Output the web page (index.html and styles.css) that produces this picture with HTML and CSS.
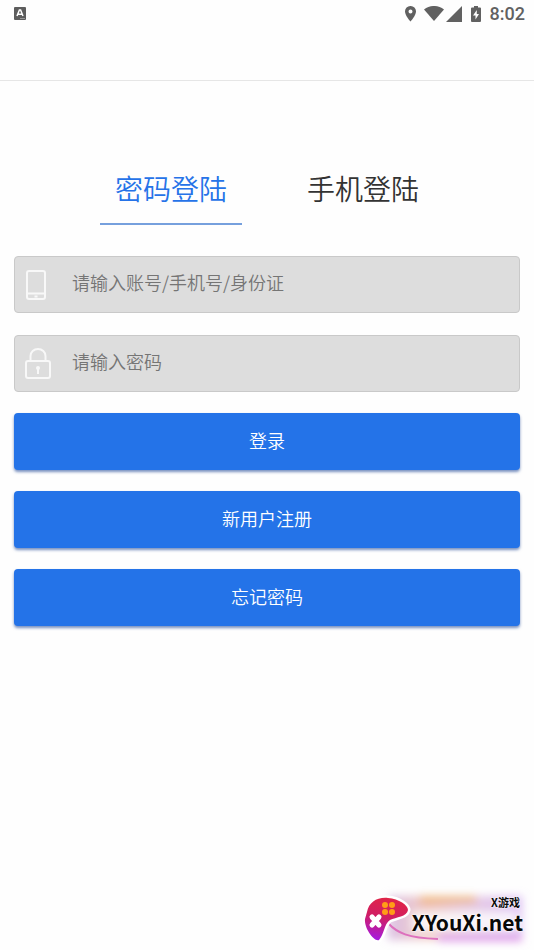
FILE: index.html
```html
<!DOCTYPE html>
<html lang="zh-CN">
<head>
<meta charset="utf-8">
<meta name="viewport" content="width=device-width, initial-scale=1">
<title>登录</title>
<link rel="stylesheet" href="styles.css">
</head>
<body>
<header class="top">
  <div class="status">
    <svg class="status-app" width="12" height="13" viewBox="0 0 12 13" aria-hidden="true">
      <rect width="12" height="13" rx="1" fill="#5d5d5d"/>
      <path d="M3 9 5.400 3h1.200L9 9M4 7.200h4" fill="none" stroke="#fff" stroke-width="1.500"/>
      <path d="M6 11.500h5" stroke="#999"/>
    </svg>
    <div class="status-icons">
      <svg class="pin" width="11" height="16" viewBox="0 0 11 16" aria-hidden="true">
        <path fill-rule="evenodd" d="M5.500 0A5.400 5.400 0 0 0 0 5.500C0 9.500 5.500 15.500 5.500 15.500S11 9.500 11 5.500A5.400 5.400 0 0 0 5.500 0ZM5.500 3.500a2 2 0 1 1 0 4 2 2 0 0 1 0-4Z"/>
      </svg>
      <svg class="wifi" width="20" height="15" viewBox="0 0 20 15" aria-hidden="true">
        <path d="M0 3.500C6-1.200 14-1.200 20 3.500L10 15Z"/>
      </svg>
      <svg class="signal" width="16" height="16" viewBox="0 0 16 16" aria-hidden="true">
        <path d="M16 0V16H0Z"/>
      </svg>
      <svg class="battery" width="10" height="16" viewBox="0 0 10 16" aria-hidden="true">
        <path fill-rule="evenodd" d="M3 0h4v1.500h2a1 1 0 0 1 1 1V15a1 1 0 0 1-1 1H1a1 1 0 0 1-1-1V2.500a1 1 0 0 1 1-1h2ZM5.800 4 2 9.500h2.500v4L8 8H5.800Z"/>
      </svg>
      <span class="time">8:02</span>
    </div>
  </div>
</header>
<main class="login">
  <nav class="tabs">
    <a class="tab tab-active" href="#password">密码登陆</a>
    <a class="tab" href="#phone">手机登陆</a>
  </nav>
  <form class="form">
    <label class="field">
      <svg class="field-icon" width="26" height="32" viewBox="0 0 26 32" aria-hidden="true">
        <rect x="2" y="2" width="18" height="28" rx="2"/>
        <path d="M2 24.500h18"/>
        <path d="M9.500 27.500h3"/>
      </svg>
      <input type="text" placeholder="请输入账号/手机号/身份证" aria-label="账号">
    </label>
    <label class="field">
      <svg class="field-icon" width="26" height="32" viewBox="0 0 26 32" aria-hidden="true">
        <rect x="1" y="13" width="24" height="17" rx="2"/>
        <path d="M5.500 13V8a7.500 7 0 0 1 15 0V13"/>
        <circle cx="13" cy="20" r="1"/>
        <path d="M13 20v6"/>
      </svg>
      <input type="password" placeholder="请输入密码" aria-label="密码">
    </label>
    <div class="actions">
      <button class="btn" type="submit">登录</button>
      <button class="btn" type="button">新用户注册</button>
      <button class="btn" type="button">忘记密码</button>
    </div>
  </form>
</main>
<footer class="brand">
  <svg class="brand-art" width="180" height="65" viewBox="0 0 180 65" aria-hidden="true">
    <defs>
      <linearGradient id="pad" x1="0.500" y1="0" x2="0.300" y2="1">
        <stop offset="0" stop-color="#e02548"/>
        <stop offset="0.450" stop-color="#d01e63"/>
        <stop offset="1" stop-color="#a51ae0"/>
      </linearGradient>
      <linearGradient id="haze" x1="0" x2="1">
        <stop offset="0" stop-color="#cda9dc"/>
        <stop offset="0.300" stop-color="#e9b0a8"/>
        <stop offset="0.600" stop-color="#dcb6d8"/>
        <stop offset="1" stop-color="#cfa6ee"/>
      </linearGradient>
      <filter id="soft" x="-20%" y="-40%" width="140%" height="180%"><feGaussianBlur stdDeviation="4"/></filter>
    </defs>
    <g filter="url(#soft)">
      <rect x="34" y="11" width="134" height="44" fill="url(#haze)" opacity="0.700"/>
      <rect x="66" y="11" width="56" height="7" fill="#efb06a" opacity="0.700"/>
      <rect x="84" y="50" width="84" height="6" fill="#dd94e8"/>
      <rect x="58" y="27" width="105" height="19" fill="#fff" opacity="0.800"/>
    </g>
    <path d="M34 38C43 48 54 53 84 54" fill="none" stroke="#dd70bd" stroke-width="2"/>
    <path d="M13 27C15 17 23 12 34 13 45 14 54 20 54 25 53 32 42 32 36 35 30 39 30 50 25 55 20 57 10 43 11 34Z" fill="url(#pad)" stroke="#fff" stroke-width="5" stroke-linejoin="round" paint-order="stroke"/>
    <path d="M18 32 25 40M25 32 18 40" stroke="#fff" stroke-width="5" stroke-linecap="round"/>
    <g fill="#ff9d17"><circle cx="31" cy="20" r="3"/><circle cx="38" cy="20" r="3"/><circle cx="31" cy="27" r="3"/><circle cx="38" cy="27" r="3"/></g>
  </svg>
  <div class="brand-text">
    <span class="brand-cn">X游戏</span>
    <span class="brand-name">XYouXi.net</span>
  </div>
</footer>
</body>
</html>
```
FILE: styles.css
```css
* {
  box-sizing: border-box;
}

body {
  margin: 0;
  min-height: 100vh;
  display: flex;
  flex-direction: column;
  background: #fefefe;
  color: #333;
  font-family: "Noto Sans CJK SC", sans-serif;
}

.top {
  height: 81px;
  border-bottom: 1px solid #e6e6e6;
}

.status {
  height: 27px;
  padding: 0 9px 0 14px;
  display: flex;
  align-items: center;
  justify-content: space-between;
}

.status-icons {
  display: flex;
  align-items: center;
  fill: #616161;
}

.pin {
  margin-right: 8px;
}

.wifi {
  margin-right: 2px;
}

.signal {
  margin-right: 9px;
}

.battery {
  margin-right: 9px;
}

.time {
  color: #616161;
  font: 500 18px/28px Roboto, sans-serif;
}

.login {
  flex: 1;
  padding: 76px 14px 0;
}

.tabs {
  display: flex;
  justify-content: center;
  gap: 50px;
}

.tab {
  width: 142px;
  height: 68px;
  border-bottom: 2px solid transparent;
  color: #333;
  font-size: 28px;
  font-weight: 350;
  line-height: 62px;
  text-align: center;
  text-decoration: none;
}

.tab-active {
  border-color: #76a0dd;
  color: #2673e8;
}

.form {
  margin-top: 31px;
  display: flex;
  flex-direction: column;
  gap: 22px;
}

.field {
  height: 57px;
  padding: 0 10px;
  display: flex;
  align-items: center;
  gap: 21px;
  background: #ddd;
  border: 1px solid #c9c9c9;
  border-radius: 4px;
}

.field-icon {
  flex: none;
  fill: none;
  stroke: #f8f8f8;
  stroke-width: 2;
}

.field input {
  flex: 1;
  min-width: 0;
  height: 100%;
  padding: 0 0 6px;
  border: 0;
  outline: 0;
  background: transparent;
  color: #333;
  font: 350 18px "Noto Sans CJK SC", sans-serif;
}

.field input::placeholder {
  color: #757575;
}

.actions {
  margin-top: -1px;
  display: flex;
  flex-direction: column;
  gap: 21px;
}

.btn {
  height: 57px;
  padding: 0 0 4px;
  border: 0;
  border-radius: 4px;
  background: #2473e8;
  box-shadow: 0 2px 3px rgba(30, 70, 150, 0.6);
  color: #fff;
  font: 350 18px "Noto Sans CJK SC", sans-serif;
}

.brand {
  position: relative;
  align-self: flex-end;
  display: flex;
}

.brand-text {
  position: absolute;
  inset: 9px 11px auto auto;
  display: flex;
  flex-direction: column;
  align-items: flex-end;
  color: #080808;
  font-weight: 700;
  text-shadow: 0 0 2px #fff, 0 0 2px #fff;
}

.brand-cn {
  padding-right: 3px;
  font-size: 11px;
  line-height: 16px;
}

.brand-name {
  font-size: 21px;
  line-height: 24px;
}
```
